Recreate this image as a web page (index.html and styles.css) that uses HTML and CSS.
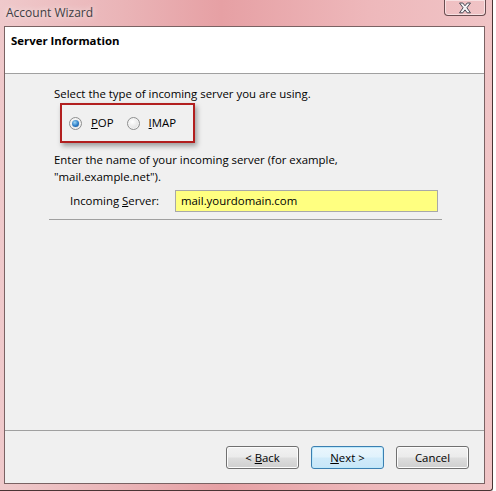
FILE: index.html
```html
<!DOCTYPE html>
<html>
<head>
<meta charset="utf-8">
<link rel="stylesheet" href="styles.css">
</head>
<body>
<div class="window">
  <div class="titlebar">
    <span class="title">Account Wizard</span>
    <span class="close">
      <svg width="20" height="12" viewBox="0 0 20 12">
        <path d="M4.5 1 L7.8 1 L10 3.8 L12.2 1 L15.5 1 L11.9 5.8 L15.5 10.8 L12.2 10.8 L10 7.9 L7.8 10.8 L4.5 10.8 L8.1 5.8 Z" fill="#f4f4f6" stroke="#4a4a55" stroke-width="1" stroke-linejoin="round"/>
      </svg>
    </span>
  </div>
  <div class="client">
    <div class="header">Server Information</div>
    <div class="body">
      <p class="line">Select the type of incoming server you are using.</p>
      <div class="choice">
        <label class="opt"><span class="radio on"></span><span><u>P</u>OP</span></label>
        <label class="opt"><span class="radio"></span><span><u>I</u>MAP</span></label>
      </div>
      <p class="line two">Enter the name of your incoming server (for example,<br>"mail.example.net").</p>
      <div class="field">
        <span class="flabel">Incoming <u>S</u>erver:</span>
        <span class="input">mail.yourdomain.com</span>
      </div>
      <div class="sep"></div>
    </div>
    <div class="footer">
      <span class="btn"><span>&lt; <u>B</u>ack</span></span>
      <span class="btn default"><span><u>N</u>ext &gt;</span></span>
      <span class="btn"><span>Cancel</span></span>
    </div>
  </div>
</div>
</body>
</html>
```
FILE: styles.css
```css
html, body {
  margin: 0;
  padding: 0;
  background: #ffffff;
}
body {
  font-family: "Open Sans", "Noto Sans", sans-serif;
  font-size: 11.4px;
  color: #000;
}
.window {
  width: 492px;
  height: 490px;
  border-right: 1px solid #4a3434;
  border-bottom: 1px solid #4a3434;
  border-bottom-right-radius: 3px;
  background: linear-gradient(90deg, #efc9cb 0%, #eab4b7 25%, #e6a0a4 45%, #eeb8bb 75%, #f0c4c6 100%);
  display: flex;
  flex-direction: column;
}
.titlebar {
  height: 26px;
  display: flex;
  align-items: flex-start;
  justify-content: space-between;
}
.title {
  margin-left: 6px;
  margin-top: 5px;
  line-height: 16px;
  font-size: 12px;
  color: #3e3e44;
  text-shadow: 0 0 6px rgba(255,255,255,0.9);
}
.close {
  width: 40px;
  height: 15px;
  margin-right: 6px;
  border: 1px solid #6a4d50;
  border-top: none;
  border-radius: 0 0 4px 4px;
  box-shadow: inset 0 0 0 1px rgba(255,255,255,0.5);
  display: flex;
  align-items: center;
  justify-content: center;
}
.close svg { display: block; margin-top: 1px; }
.client {
  margin-left: 4px;
  width: 479px;
  height: 456px;
  border: 1px solid #7a6263;
  background: #f0f0f0;
  display: flex;
  flex-direction: column;
}
.header {
  background: #ffffff;
  border-bottom: 1px solid #a0a0a0;
  font-weight: bold;
  padding: 6px 0 0 6px;
  box-sizing: border-box;
  height: 47px;
  line-height: 16px;
}
.body {
  flex: 1;
  padding: 12px 0 0 49px;
}
.line {
  margin: 0;
  line-height: 16px;
}
.line.two {
  margin-top: 8px;
  line-height: 17px;
}
.choice {
  margin: 1px 0 0 6px;
  width: 124px;
  height: 36px;
  border: 2px solid #b21f1f;
  box-shadow: 2px 3px 5px rgba(0,0,0,0.35);
  display: flex;
  align-items: center;
  gap: 13px;
  padding-left: 7px;
}
.opt {
  display: flex;
  align-items: center;
  gap: 9px;
  line-height: 16px;
}
.radio {
  width: 11px;
  height: 11px;
  border-radius: 50%;
  border: 1px solid #8e8f8f;
  background: radial-gradient(circle at 40% 35%, #ffffff 0%, #e6e6e6 60%, #cfcfcf 100%);
  box-shadow: inset 0 0 0 1px #f4f4f4;
  position: relative;
}
.radio.on::after {
  content: "";
  position: absolute;
  left: 2px;
  top: 2px;
  width: 7px;
  height: 7px;
  border-radius: 50%;
  background: radial-gradient(circle at 40% 35%, #9ed7f5 0%, #2b7cc6 55%, #1c4f8a 100%);
}
.field {
  margin-top: 5px;
  margin-left: 16px;
  display: flex;
  align-items: center;
}
.flabel {
  width: 105px;
  white-space: nowrap;
  line-height: 16px;
}
.input {
  width: 256px;
  height: 20px;
  border: 1px solid #a8a8a8;
  background: #ffff80;
  padding-left: 5px;
  line-height: 20px;
}
.sep {
  margin-top: 7px;
  margin-left: -5px;
  width: 393px;
  height: 1px;
  background: #a0a0a0;
}
.footer {
  height: 53px;
  box-sizing: border-box;
  border-top: 1px solid #a0a0a0;
  padding: 15px 15px 0 0;
  display: flex;
  justify-content: flex-end;
  align-items: flex-start;
  gap: 12px;
}
.btn {
  width: 71px;
  height: 21px;
  border: 1px solid #707070;
  border-radius: 3px;
  background: linear-gradient(#f2f2f2 0%, #ebebeb 48%, #dddddd 52%, #cfcfcf 100%);
  box-shadow: inset 0 0 0 1px #fcfcfc;
  display: flex;
  align-items: center;
  justify-content: center;
  line-height: 16px;
  white-space: pre;
}
.btn.default {
  border-color: #3c7fb1;
  background: linear-gradient(#eaf6fd 0%, #e0f2fc 48%, #d0ebfa 52%, #c8e6f8 100%);
  box-shadow: inset 0 0 0 1px #bde9fb;
}
```
